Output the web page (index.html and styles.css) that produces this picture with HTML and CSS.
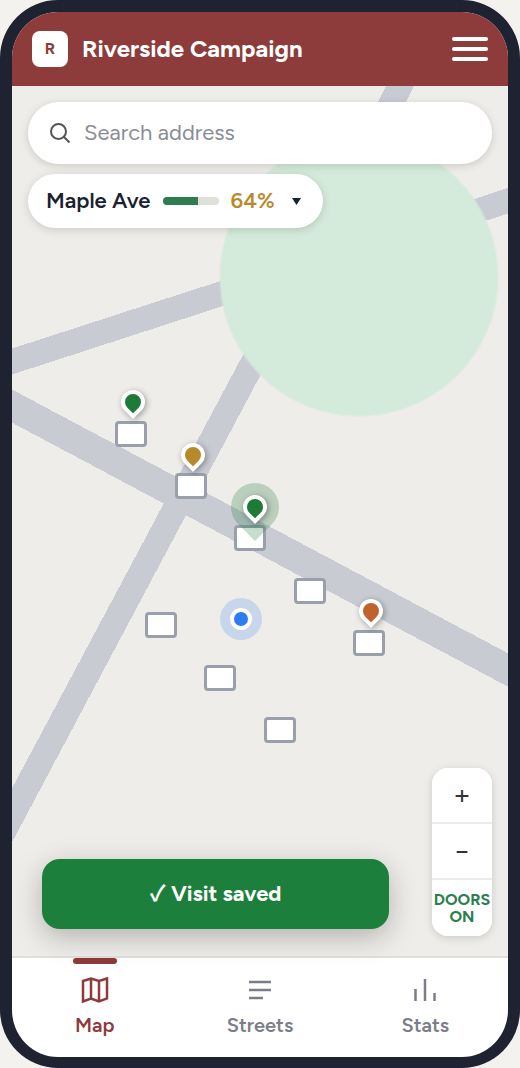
FILE: index.html
```html
<!DOCTYPE html>
<html lang="en">
<head>
<meta charset="utf-8">
<meta name="viewport" content="width=device-width, initial-scale=1">
<title>Riverside Campaign</title>
<link rel="stylesheet" href="styles.css">
</head>
<body>
<div class="phone">
  <header class="header">
    <span class="logo">R</span>
    <h1 class="title">Riverside Campaign</h1>
    <button class="menu" type="button" aria-label="Menu"><span class="menu-line"></span><span class="menu-line"></span><span class="menu-line"></span></button>
  </header>

  <main class="map">
    <svg class="terrain" viewBox="0 0 496 870" preserveAspectRatio="none" aria-hidden="true">
      <defs>
        <radialGradient id="park">
          <stop offset="0.98" stop-color="#d4eada"/>
          <stop offset="1" stop-color="#d4eada" stop-opacity="0"/>
        </radialGradient>
      </defs>
      <g fill="#c9cbd3" shape-rendering="crispEdges">
        <polygon points="0,262.5 496,102 496,127.5 0,288.5"/>
        <polygon points="0,303.5 496,567.3 496,600.7 0,336.7"/>
        <polygon points="0,702.3 374.3,0 402.3,0 0,756.3"/>
      </g>
      <circle cx="347" cy="191" r="140.500" fill="url(#park)"/>
    </svg>

    <div class="house h1"></div>
    <div class="house h2"></div>
    <div class="house h3"></div>
    <div class="house h4"></div>
    <div class="house h5"></div>
    <div class="house h6"></div>
    <div class="house h7"></div>
    <div class="house h8"></div>
    <button class="pin p1 visited" type="button" aria-label="Visited"></button>
    <button class="pin p2 pending" type="button" aria-label="Follow up"></button>
    <button class="pin p3 visited selected" type="button" aria-label="Visited, selected"></button>
    <button class="pin p4 refused" type="button" aria-label="Refused"></button>
    <div class="me"></div>

    <div class="overlay">
      <label class="search">
        <svg class="search-icon" viewBox="0 0 24 24" aria-hidden="true"><circle cx="10.500" cy="10.500" r="7.500"/><path d="M16 16 21.500 21.500"/></svg>
        <input class="search-input" type="search" placeholder="Search address" aria-label="Search address">
      </label>
      <button class="street" type="button">
        <span>Maple Ave</span>
        <span class="progress"><span class="progress-fill" style="width: 64%"></span></span>
        <span class="percent">64%</span>
        <svg class="caret" viewBox="0 0 9 7" aria-hidden="true"><path d="M0 0h9L4.500 7z"/></svg>
      </button>
    </div>

    <div class="controls">
      <button class="control" type="button" aria-label="Zoom in">+</button>
      <button class="control" type="button" aria-label="Zoom out">−</button>
      <button class="control doors" type="button">DOORS ON</button>
    </div>
    <div class="toast" role="status"><span class="check">✓</span> Visit saved</div>
  </main>

  <nav class="tabs">
    <a class="tab active" href="#map">
      <svg class="tab-icon" viewBox="0 0 32 32" aria-hidden="true"><path d="M4 7 12 4.500 20 7 28 4.500V24.500L20 27.500 12 24.500 4 27.500zM12 4.500V24.500M20 7V27.500"/></svg>
      <span>Map</span>
    </a>
    <a class="tab" href="#streets">
      <svg class="tab-icon" viewBox="0 0 32 32" aria-hidden="true"><path d="M5 8H27M5 16H27M5 24H19"/></svg>
      <span>Streets</span>
    </a>
    <a class="tab" href="#stats">
      <svg class="tab-icon" viewBox="0 0 32 32" aria-hidden="true"><path d="M6.500 15V27M16 5V27M25.500 19V27"/></svg>
      <span>Stats</span>
    </a>
  </nav>
</div>
</body>
</html>
```
FILE: styles.css
```css
* { box-sizing: border-box; }
body {
  margin: 0;
  background: #f4f2ee;
  color: #1a2130;
  font-family: Figtree, Lato, "Liberation Sans", sans-serif;
}
button { margin: 0; padding: 0; border: 0; font: inherit; color: inherit; }
.phone {
  display: flex;
  flex-direction: column;
  min-height: 100vh;
  border: 12px solid #1f2230;
  border-bottom-width: 11px;
  border-radius: 58px;
  overflow: hidden;
  background: #fff;
}
.header {
  display: flex;
  align-items: center;
  gap: 14px;
  height: 74px;
  padding: 0 20px;
  background: #8d3b3b;
  color: #fff;
}
.logo {
  display: grid;
  place-items: center;
  width: 36px;
  height: 36px;
  border-radius: 8px;
  background: #fff;
  color: #8d3b3b;
  font-size: 16px;
  line-height: 18px;
  font-weight: 700;
}
.title { flex: 1; margin: 0; font-size: 24px; line-height: 30px; font-weight: 700; }
.menu { display: flex; flex-direction: column; gap: 6px; width: 36px; background: none; }
.menu-line { height: 4px; border-radius: 2px; background: #fff; }

.map { position: relative; flex: 1; background: #eeede9; }
.terrain { position: absolute; inset: 0; width: 100%; height: 100%; }
.house {
  position: absolute;
  width: 32px;
  height: 26px;
  margin: -13px 0 0 -16px;
  border: 3px solid #99a0ab;
  border-radius: 4px;
  background: #fff;
}
.h1 { left: 24%; top: 40%; }
.h2 { left: 36%; top: 46%; }
.h3 { left: 48%; top: 52%; }
.h4 { left: 60%; top: 58%; }
.h5 { left: 72%; top: 64%; }
.h6 { left: 30%; top: 62%; }
.h7 { left: 42%; top: 68%; }
.h8 { left: 54%; top: 74%; }
.pin {
  position: absolute;
  width: 24px;
  height: 24px;
  margin-left: -12px;
  border: 4px solid #fff;
  border-radius: 50% 50% 50% 0;
  transform: rotate(-45deg);
  box-shadow: 0 2px 6px rgba(0, 0, 0, 0.35);
}
.p1 { left: 24.4%; top: 34.9%; }
.p2 { left: 36.5%; top: 41%; }
.p3 { left: 49%; top: 47%; }
.p4 { left: 72.4%; top: 59%; }
.visited { background: #1f7a38; }
.pending { background: #b8892b; }
.refused { background: #c1622d; }
.selected { box-shadow: 0 2px 6px rgba(0, 0, 0, 0.35), 0 0 0 12px rgba(30, 125, 60, 0.25); }
.me {
  position: absolute;
  left: 46%;
  top: 61%;
  width: 22px;
  height: 22px;
  margin: -9px 0 0 -10px;
  border: 4px solid #fff;
  border-radius: 50%;
  background: #2f7bf0;
  box-shadow: 0 0 0 10px rgba(47, 123, 240, 0.2);
}

.overlay {
  position: relative;
  display: flex;
  flex-direction: column;
  align-items: flex-start;
  gap: 10px;
  padding: 16px;
}
.search {
  display: flex;
  align-items: center;
  gap: 12px;
  width: 100%;
  height: 62px;
  padding: 0 20px;
  border-radius: 31px;
  background: #fff;
  box-shadow: 0 2px 8px rgba(0, 0, 0, 0.15);
}
.search-icon { width: 24px; height: 24px; fill: none; stroke: #555; stroke-width: 2; }
.search-input {
  flex: 1;
  min-width: 0;
  height: 28px;
  padding: 0 0 2px;
  border: 0;
  outline: 0;
  background: none;
  font: inherit;
  font-size: 22px;
}
.search-input::placeholder { color: #8a8d96; opacity: 1; }
.street {
  display: flex;
  align-items: center;
  gap: 12px;
  height: 54px;
  padding: 0 22px 0 18px;
  border-radius: 27px;
  background: #fff;
  box-shadow: 0 2px 8px rgba(0, 0, 0, 0.15);
  font-size: 22px;
  line-height: 28px;
  font-weight: 600;
}
.progress { width: 56px; height: 8px; border-radius: 4px; overflow: hidden; background: #e0dfda; }
.progress-fill { display: block; height: 100%; background: #2e7d4f; }
.percent { color: #b8892b; }
.caret { width: 9px; height: 7px; margin: 0 0 0 5px; fill: #1a2130; }

.controls {
  position: absolute;
  right: 16px;
  bottom: 20px;
  display: flex;
  flex-direction: column;
  width: 60px;
  border-radius: 16px;
  overflow: hidden;
  background: #fff;
  box-shadow: 0 2px 8px rgba(0, 0, 0, 0.15);
}
.control {
  height: 56px;
  padding-bottom: 2px;
  border-bottom: 2px solid #ebebeb;
  background: #fff;
  color: #333;
  font-size: 28px;
  line-height: 34px;
  font-weight: 400;
}
.doors { padding: 0; border-bottom: 0; color: #2e7d4f; font-size: 16px; line-height: 17px; font-weight: 700; }
.toast {
  position: absolute;
  left: 30px;
  bottom: 27px;
  z-index: 1;
  width: 70%;
  height: 70px;
  border-radius: 18px;
  background: #1c7f3b;
  box-shadow: 0 8px 28px rgba(0, 0, 0, 0.25);
  color: #fff;
  font-size: 22px;
  line-height: 70px;
  font-weight: 700;
  text-align: center;
}
.check { font-family: "Noto Sans CJK JP", sans-serif; line-height: 1; }

.tabs {
  display: grid;
  grid-template-columns: repeat(3, 1fr);
  height: 101px;
  border-top: 2px solid #e0dfda;
}
.tab {
  display: flex;
  flex-direction: column;
  align-items: center;
  gap: 6px;
  color: #7b7e88;
  font-size: 20px;
  line-height: 26px;
  font-weight: 600;
  text-decoration: none;
}
.tab::before { content: ""; width: 44px; height: 6px; border-radius: 3px; }
.active { color: #8d3b3b; }
.active::before { background: #8d3b3b; }
.tab-icon { width: 32px; height: 32px; margin-top: 4px; fill: none; stroke: currentColor; stroke-width: 2.5; }
```
